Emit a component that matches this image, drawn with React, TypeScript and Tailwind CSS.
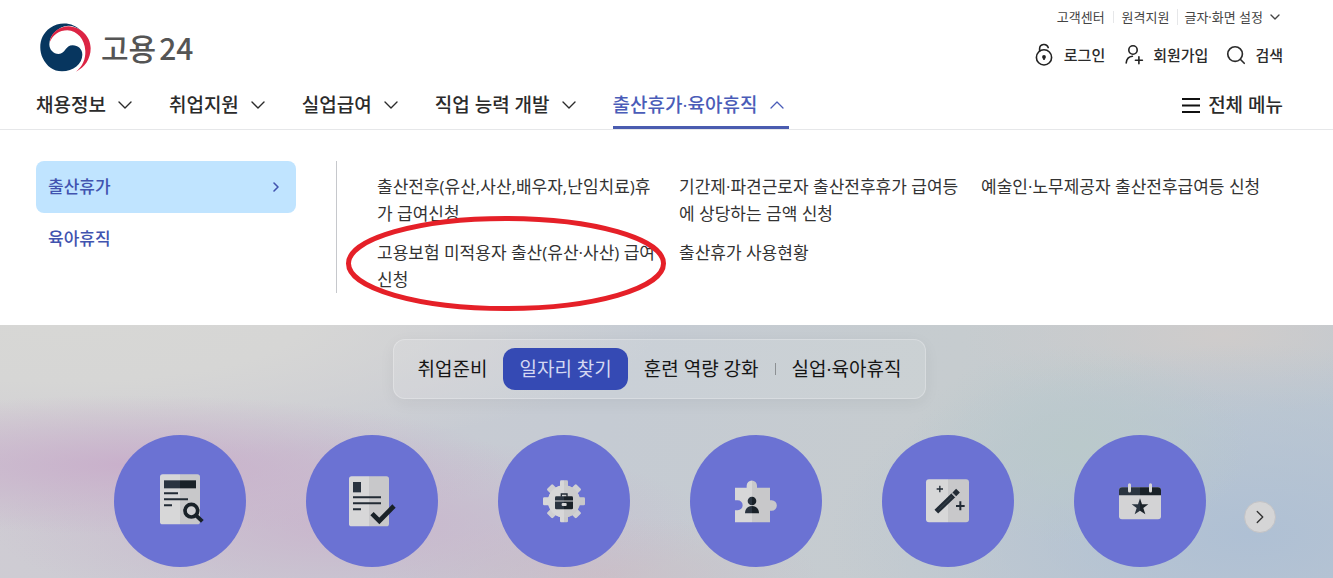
import type { ReactNode } from "react";
import { ChevronDown, ChevronRight, ChevronUp, Search } from "lucide-react";

const mainMenu = ["채용정보", "취업지원", "실업급여", "직업 능력 개발", "출산휴가·육아휴직"];
const activeMenu = "출산휴가·육아휴직";

const subLinks = [
  { label: "출산전후(유산,사산,배우자,난임치료)휴가 급여신청" },
  { label: "기간제·파견근로자 출산전후휴가 급여등에 상당하는 금액 신청" },
  { label: "예술인·노무제공자 출산전후급여등 신청" },
  { label: "고용보험 미적용자 출산(유산·사산) 급여 신청", marked: true },
  { label: "출산휴가 사용현황" },
];

function Emblem() {
  return (
    <svg viewBox="0 0 153 147" className="h-[49px] w-[51px]" aria-hidden="true">
      <path
        fill="#07365f"
        d="M124 24C100-2 60-6 30 15 0 36-6 75 8 105 20 130 40 145 66 145c34 0 61-23 61-50 0-17-13-28-29-28-22 0-22 26-42 26-16 0-28-13-28-29C28 35 55 10 85 8c15 0 27 6 39 16Z"
      />
      <path
        fill="#dc2444"
        d="M29 58C32 30 58 10 86 10c36 2 66 30 66 66 0 32-18 58-44 70 20-16 29-38 28-62C134 48 112 24 82 22 58 22 38 36 29 58Z"
      />
    </svg>
  );
}

function LockIcon() {
  return (
    <svg viewBox="0 0 24 24" className="size-6" fill="none" stroke="#222" strokeWidth="1.6" aria-hidden="true">
      <circle cx="12" cy="14.4" r="7.6" />
      <path d="M7.600 8V5.800a4.400 4.400 0 0 1 8.600-1.200" strokeLinecap="round" />
      <circle cx="12" cy="14" r="1.100" fill="#222" />
      <path d="M12 14v3" />
    </svg>
  );
}

function JoinIcon() {
  return (
    <svg viewBox="0 0 24 24" className="size-6" fill="none" stroke="#222" strokeWidth="1.6" strokeLinecap="round" aria-hidden="true">
      <circle cx="12" cy="7" r="4.2" />
      <path d="M5.200 20c.4-4 2.600-6.400 6.200-6.700M14.400 17.200h7M17.900 13.700v7" />
    </svg>
  );
}

function Halves({ id, x }: { id: string; x: number }) {
  return (
    <defs>
      <linearGradient id={id} gradientUnits="userSpaceOnUse" x1={x - 100} x2={x + 100} y1="0" y2="0">
        <stop offset="0.5" stopColor="#d7d7d8" />
        <stop offset="0.5" stopColor="#c8c8ca" />
      </linearGradient>
      <linearGradient id={id + "-ink"} gradientUnits="userSpaceOnUse" x1={x - 100} x2={x + 100} y1="0" y2="0">
        <stop offset="0.5" stopColor="#2a3440" />
        <stop offset="0.5" stopColor="#192128" />
      </linearGradient>
    </defs>
  );
}

const services: { name: string; viewBox: string; art: ReactNode }[] = [
  {
    name: "채용공고 검색",
    viewBox: "42 44 396 396",
    art: (
      <>
        <Halves id="doc" x={240} />
        <rect x="180" y="162" width="120" height="150" rx="8" fill="url(#doc)" />
        <rect x="192" y="180" width="96" height="24" fill="url(#doc-ink)" />
        <path d="M192 219h42M192 237h72M192 255h24" stroke="#222b35" strokeWidth="6" />
        <circle cx="274" cy="271" r="19" fill="#d0d0d2" stroke="#192128" strokeWidth="11" />
        <path d="m288 285 19 18" stroke="#192128" strokeWidth="12" />
      </>
    ),
  },
  {
    name: "이력서 관리",
    viewBox: "618 44 396 396",
    art: (
      <>
        <Halves id="resume" x={807} />
        <rect x="747" y="168" width="120" height="150" rx="8" fill="url(#resume)" />
        <rect x="759" y="185" width="24" height="31" fill="#2a3440" />
        <path d="M759 231h84M759 249h84M759 267h24" stroke="#222b35" strokeWidth="6" />
        <path d="m816 280 22 22 44-45" fill="none" stroke="#192128" strokeWidth="14" />
      </>
    ),
  },
  {
    name: "직업 정보",
    viewBox: "54 44 396 396",
    art: (
      <>
        <Halves id="gear" x={252} />
        <g fill="url(#gear)">
          <circle cx="252" cy="243" r="48" />
          <rect x="240" y="180" width="24" height="126" rx="4" />
          <rect x="189" y="231" width="126" height="24" rx="4" />
        </g>
        <g transform="rotate(45 252 243)" fill="#d0d0d2">
          <rect x="240" y="181" width="24" height="124" rx="4" />
          <rect x="190" y="231" width="124" height="24" rx="4" />
        </g>
        <path d="M252 195a48 48 0 0 0 0 96Z" fill="#d7d7d8" />
        <path d="M252 195a48 48 0 0 1 0 96Z" fill="#cbcbcc" />
        <path d="M244 229v-8h17v8" fill="none" stroke="#222b35" strokeWidth="4" />
        <rect x="225" y="228" width="54" height="39" rx="4" fill="url(#gear-ink)" />
        <path d="M225 242h54" stroke="#d0d0d2" strokeWidth="3" />
        <rect x="245" y="248" width="15" height="9" rx="3" fill="#d7d7d8" />
      </>
    ),
  },
  {
    name: "맞춤 인재",
    viewBox: "630 44 396 396",
    art: (
      <>
        <Halves id="puzzle" x={816} />
        <path
          d="M765 202h35v-6a15.500 15.500 0 0 1 31 0v6h39v38h5a15.500 15.500 0 0 1 0 31h-5v35H765v-36h8a15 15 0 0 0 0-30h-8Z"
          fill="url(#puzzle)"
        />
        <circle cx="816" cy="242" r="13" fill="url(#puzzle-ink)" />
        <path d="M795 279c0-14 9-22 21-22s21 8 21 22Z" fill="url(#puzzle-ink)" />
      </>
    ),
  },
  {
    name: "일자리 추천",
    viewBox: "66 44 396 396",
    art: (
      <>
        <Halves id="wand" x={263} />
        <rect x="198" y="177" width="129" height="129" rx="9" fill="url(#wand)" />
        <path d="m229 274 52-50" stroke="#222b35" strokeWidth="16" />
        <path d="m283 222 11-11" stroke="#222b35" strokeWidth="16" />
        <path d="m275 219 12 12" stroke="#d0d0d2" strokeWidth="3" />
        <path d="m235 269 40-39" stroke="#46515b" strokeWidth="2" />
        <path d="M230 206h19M239.500 196v20" stroke="#222b35" strokeWidth="4" />
        <path d="M288 257h26M301 243v27" stroke="#222b35" strokeWidth="6" />
      </>
    ),
  },
  {
    name: "채용 행사",
    viewBox: "642 44 396 396",
    art: (
      <>
        <Halves id="cal" x={840} />
        <rect x="777" y="201" width="126" height="96" rx="9" fill="#d3d3d5" />
        <path d="M777 225v-15a9 9 0 0 1 9-9h108a9 9 0 0 1 9 9v15Z" fill="url(#cal-ink)" />
        <path d="M808.500 193v19M871.500 193v19" stroke="#d7d7d8" strokeWidth="9" strokeLinecap="round" />
        <path d="m840 234 6 18h19l-15 11 6 19-16-11-16 11 6-19-15-11h19Z" fill="url(#cal-ink)" />
      </>
    ),
  },
];

export default function App() {
  return (
    <div className="bg-white font-['Open_Sans','Noto_Sans_CJK_KR',sans-serif] text-[#2b2b2b]">
      <header className="border-b border-[#e6e7e9] pr-[50px] pl-9">
        <div className="flex justify-between">
          <a href="#home" className="mt-[22px] ml-1 flex h-[50px] items-center gap-2.5">
            <Emblem />
            <span className="flex gap-[3px] font-['Noto_Sans_CJK_KR',sans-serif] text-[30px] leading-[48px] font-medium text-[#555]">
              <span>고용</span>
              <span>24</span>
            </span>
          </a>
          <div className="flex flex-col items-end">
            <ul className="mt-[7px] flex h-5 items-center text-[13px] text-[#444]">
              <li className="leading-3"><a href="#center" className="pr-2">고객센터</a></li>
              <li className="border-l border-[#e6e7e9] leading-3"><a href="#remote" className="px-2">원격지원</a></li>
              <li className="border-l border-[#e6e7e9] leading-3">
                <button type="button" className="flex items-center gap-1 pl-1.5">
                  글자·화면 설정
                  <ChevronDown className="size-4" strokeWidth={2} />
                </button>
              </li>
            </ul>
            <div className="mt-4 flex h-6 items-center gap-4 text-[15px] font-medium">
              <a href="#login" className="flex items-center gap-2"><LockIcon />로그인</a>
              <a href="#join" className="flex items-center gap-2"><JoinIcon />회원가입</a>
              <button type="button" className="flex items-center gap-[7px]">
                <Search className="size-6 p-px" strokeWidth={1.8} />검색
              </button>
            </div>
          </div>
        </div>
        <div className="mt-[9px] flex h-12 items-stretch justify-between text-[19px] font-medium">
          <nav className="flex gap-8">
            {mainMenu.map((item) =>
              item === activeMenu ? (
                <button key={item} type="button" aria-expanded="true" className="flex items-center gap-2 border-b-3 border-[#4a5cb0] pt-[3px] text-[#4a5cb8]">
                  {item}
                  <ChevronUp className="size-6" strokeWidth={1.3} />
                </button>
              ) : (
                <button key={item} type="button" aria-expanded="false" className="flex items-center gap-[7px]">
                  {item}
                  <ChevronDown className="size-6" strokeWidth={1.4} />
                </button>
              ),
            )}
          </nav>
          <button type="button" className="flex items-center gap-2">
            <svg viewBox="0 0 18 16" className="h-4 w-[18px]" stroke="#111" strokeWidth="2" aria-hidden="true">
              <path d="M0 2h18M0 8.500h18M0 15h18" />
            </svg>
            전체 메뉴
          </button>
        </div>
      </header>

      <section className="flex pt-[31px] pr-[50px] pb-8 pl-9 text-[17px]">
        <nav className="w-[260px] shrink-0 font-medium text-[#4153af]">
          <a href="#maternity" className="flex h-[52px] items-center justify-between rounded-lg bg-[#c0e4ff] px-3">
            출산휴가
            <ChevronRight className="size-4" strokeWidth={2.4} />
          </a>
          <a href="#parental" className="flex h-[52px] items-center px-3">육아휴직</a>
        </nav>
        <ul className="ml-10 grid grow grid-cols-3 gap-y-3 border-l border-[#c6c8cc] pt-3 pl-10 leading-[27px] text-[#333]">
          {subLinks.map((link) => (
            <li key={link.label} className="relative pr-4 break-all">
              <a href="#service">{link.label}</a>
              {link.marked && (
                <svg viewBox="0 0 320 95" className="pointer-events-none absolute -top-[23px] -left-8 h-[95px] w-[322px]" aria-hidden="true">
                  <ellipse cx="160" cy="47.500" rx="157.500" ry="45" fill="none" stroke="#e52028" strokeWidth="5" />
                </svg>
              )}
            </li>
          ))}
        </ul>
      </section>

      <main className="bg-[radial-gradient(ellipse_380px_70px_at_130px_140px,#c9b0cb_0%,#c9b0cb00_100%),radial-gradient(ellipse_360px_90px_at_350px_200px,#c9b1cbd0_0%,#c9b1cb00_100%),radial-gradient(ellipse_220px_60px_at_600px_250px,#cdbac2a0_0%,#cdbac200_100%),radial-gradient(ellipse_170px_100px_at_1080px_120px,#bac9cb_0%,#bac9cb00_100%),radial-gradient(ellipse_420px_190px_at_1250px_210px,#afc0d4_0%,#afc0d400_100%),radial-gradient(ellipse_260px_80px_at_1220px_10px,#cfcccb_0%,#cfcccb00_100%),radial-gradient(ellipse_600px_140px_at_60px_0px,#d7d7d5_0%,#d6d6d5_40%,#d7d7d500_100%),linear-gradient(100deg,#cfccd3_0%,#c5cbd3_45%,#c6cccf_70%,#bec8d1_100%)] pt-3.5 pr-[50px] pb-[11px] pl-9">
        <div className="flex justify-center">
          <div className="flex items-center rounded-xl border border-white/25 bg-white/10 p-2 text-[19px] text-[#151515] shadow-[0_4px_16px_rgba(0,0,0,0.05)]">
            <button type="button" className="h-[42px] px-4">취업준비</button>
            <button type="button" className="h-[42px] rounded-xl bg-[#354ab4] px-4 text-[#d4d8f2]">일자리 찾기</button>
            <button type="button" className="h-[42px] px-4">훈련 역량 강화</button>
            <span className="h-3 w-px bg-[#8c9093]" />
            <button type="button" className="h-[42px] px-4">실업·육아휴직</button>
          </div>
        </div>
        <div className="mt-9 grid grid-cols-[1fr_auto_1fr]">
          <span />
          <ul className="flex gap-[60px]">
            {services.map((service) => (
              <li key={service.name}>
                <a href="#service" aria-label={service.name} className="block size-[132px] rounded-full bg-[#6b72d3]">
                  <svg viewBox={service.viewBox} className="size-full" aria-hidden="true">
                    {service.art}
                  </svg>
                </a>
              </li>
            ))}
          </ul>
          <button
            type="button"
            aria-label="다음"
            className="mt-[66px] mr-[7px] flex size-8 items-center justify-center self-start justify-self-end rounded-full border border-[#c3c3c6] bg-[#d5d5d6] text-[#333]"
          >
            <ChevronRight className="size-[22px]" strokeWidth={1.5} />
          </button>
        </div>
      </main>
    </div>
  );
}
